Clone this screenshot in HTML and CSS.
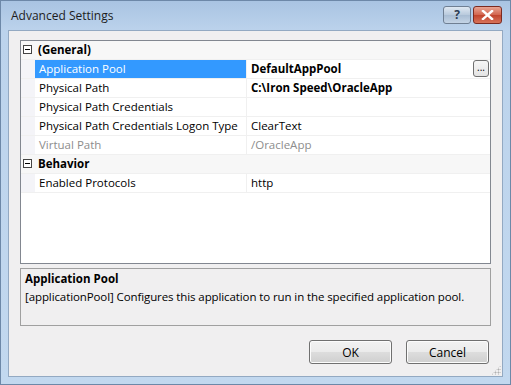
FILE: index.html
```html
<!DOCTYPE html>
<html lang="en">
<head>
    <meta charset="UTF-8">
    <title>Advanced Settings</title>
    <link rel="stylesheet" href="styles.css">
</head>
<body>
    <div class="window">
        <div class="titlebar">
            <span class="title">Advanced Settings</span>
            <div class="caption-buttons">
                <div class="cap-btn help">?</div>
                <div class="cap-btn close">
                    <svg width="13" height="10" viewBox="0 0 13 10"><path d="M2 1 L11 9 M11 1 L2 9" stroke="#fff" stroke-width="2.4" stroke-linecap="square"/></svg>
                </div>
            </div>
        </div>
        <div class="client">
            <div class="grid">
                <div class="row category">
                    <div class="margin"><span class="toggle"></span></div>
                    <div class="name">(General)</div>
                </div>
                <div class="row">
                    <div class="margin"></div>
                    <div class="name selected">Application Pool</div>
                    <div class="value bold">DefaultAppPool<span class="dots">...</span></div>
                </div>
                <div class="row">
                    <div class="margin"></div>
                    <div class="name">Physical Path</div>
                    <div class="value bold">C:\Iron Speed\OracleApp</div>
                </div>
                <div class="row">
                    <div class="margin"></div>
                    <div class="name">Physical Path Credentials</div>
                    <div class="value"></div>
                </div>
                <div class="row">
                    <div class="margin"></div>
                    <div class="name">Physical Path Credentials Logon Type</div>
                    <div class="value">ClearText</div>
                </div>
                <div class="row disabled">
                    <div class="margin"></div>
                    <div class="name">Virtual Path</div>
                    <div class="value">/OracleApp</div>
                </div>
                <div class="row category">
                    <div class="margin"><span class="toggle"></span></div>
                    <div class="name">Behavior</div>
                </div>
                <div class="row">
                    <div class="margin"></div>
                    <div class="name">Enabled Protocols</div>
                    <div class="value">http</div>
                </div>
            </div>
            <div class="desc">
                <div class="desc-title">Application Pool</div>
                <div class="desc-text">[applicationPool] Configures this application to run in the specified application pool.</div>
            </div>
            <div class="buttons">
                <button class="btn">OK</button>
                <button class="btn">Cancel</button>
            </div>
            <div class="grip"></div>
        </div>
    </div>
</body>
</html>
```

FILE: styles.css
```css
body {
    margin: 0;
    font-family: "Open Sans", "Noto Sans", sans-serif;
    font-size: 11.5px;
    color: #000;
}
.window {
    width: 511px;
    height: 385px;
    box-sizing: border-box;
    display: flex;
    flex-direction: column;
    background: linear-gradient(to bottom, #a9c4e2 0px, #bcd3ec 30px, #c2d8ef 100%);
    border: 1px solid #6d88a8;
}
.titlebar {
    height: 29px;
    display: flex;
    align-items: center;
    padding-left: 10px;
    padding-right: 8px;
}
.title {
    flex: 1;
    font-size: 12px;
    color: #1d1d1d;
}
.caption-buttons {
    display: flex;
    gap: 2px;
    margin-top: -2px;
}
.cap-btn {
    height: 18px;
    border: 1px solid #6f7f93;
    border-radius: 3px;
    display: flex;
    align-items: center;
    justify-content: center;
    box-sizing: border-box;
}
.help {
    width: 28px;
    background: linear-gradient(to bottom, #dfe8f2, #b8c9dc 50%, #a9bdd3 51%, #c4d4e6);
    color: #2d3d54;
    font-weight: bold;
    font-size: 12px;
}
.close {
    width: 29px;
    border-color: #7b2a20;
    background: linear-gradient(to bottom, #e8a493, #d2644d 50%, #c1432c 51%, #d7735a);
}
.client {
    flex: 1;
    margin: 0 7px 7px 7px;
    background: #f0eff0;
    padding: 9px 11px 0 11px;
    display: flex;
    flex-direction: column;
    position: relative;
    border: 1px solid #93a9c2;
}
.grid {
    height: 224px;
    box-sizing: border-box;
    border: 1px solid #828790;
    background: #fff;
}
.row {
    display: flex;
    height: 19px;
    line-height: 18px;
    box-sizing: border-box;
    border-bottom: 1px solid #f0f0f0;
}
.margin {
    width: 14px;
    flex: none;
    background: #f4f4f8;
    position: relative;
}
.name {
    width: 212px;
    flex: none;
    padding-left: 4px;
    box-sizing: border-box;
    white-space: nowrap;
    overflow: hidden;
    border-right: 1px solid #f0f0f0;
}
.name.selected {
    background: #3399ff;
    color: #fff;
}
.value {
    flex: 1;
    padding-left: 4px;
    position: relative;
    white-space: nowrap;
}
.bold {
    font-weight: bold;
}
.disabled {
    color: #8d8d8d;
}
.category {
    background: #f7f7f7;
}
.category .margin {
    background: #f7f7f7;
}
.category .name {
    font-weight: bold;
    border-right: none;
    padding-left: 3px;
}
.toggle {
    position: absolute;
    left: 2px;
    top: 4px;
    width: 9px;
    height: 9px;
    box-sizing: border-box;
    border: 1px solid #444;
    background: #fff;
}
.toggle::after {
    content: "";
    position: absolute;
    left: 1px;
    top: 3px;
    width: 5px;
    height: 1px;
    background: #000;
}
.dots {
    position: absolute;
    right: 1px;
    top: 0;
    width: 16px;
    height: 17px;
    box-sizing: border-box;
    border: 1px solid #707070;
    border-radius: 3px;
    background: linear-gradient(to bottom, #f6f6f6, #e4e4e4);
    font-weight: normal;
    font-size: 10px;
    line-height: 12px;
    text-align: center;
}
.desc {
    margin-top: 4px;
    height: 58px;
    box-sizing: border-box;
    border: 1px solid #a0a0a0;
    padding: 1px 4px;
}
.desc-title {
    font-weight: bold;
    line-height: 18px;
}
.desc-text {
    line-height: 18px;
    white-space: nowrap;
    letter-spacing: -0.1px;
}
.buttons {
    display: flex;
    justify-content: flex-end;
    gap: 14px;
    margin-top: 14px;
    padding-right: 2px;
}
.btn {
    width: 83px;
    height: 24px;
    font-family: inherit;
    font-size: 12px;
    color: #000;
    border: 1px solid #707070;
    border-radius: 3px;
    background: linear-gradient(to bottom, #f2f2f2 0%, #ebebeb 50%, #dddddd 51%, #cfcfcf 100%);
    box-shadow: inset 0 0 0 1px #fcfcfc;
}
.grip {
    position: absolute;
    right: 1px;
    bottom: 1px;
    width: 10px;
    height: 10px;
    background: radial-gradient(circle, #b0b0b0 0.8px, transparent 1.2px) 0 0 / 3px 3px;
    clip-path: polygon(100% 0, 100% 100%, 0 100%);
}
```
